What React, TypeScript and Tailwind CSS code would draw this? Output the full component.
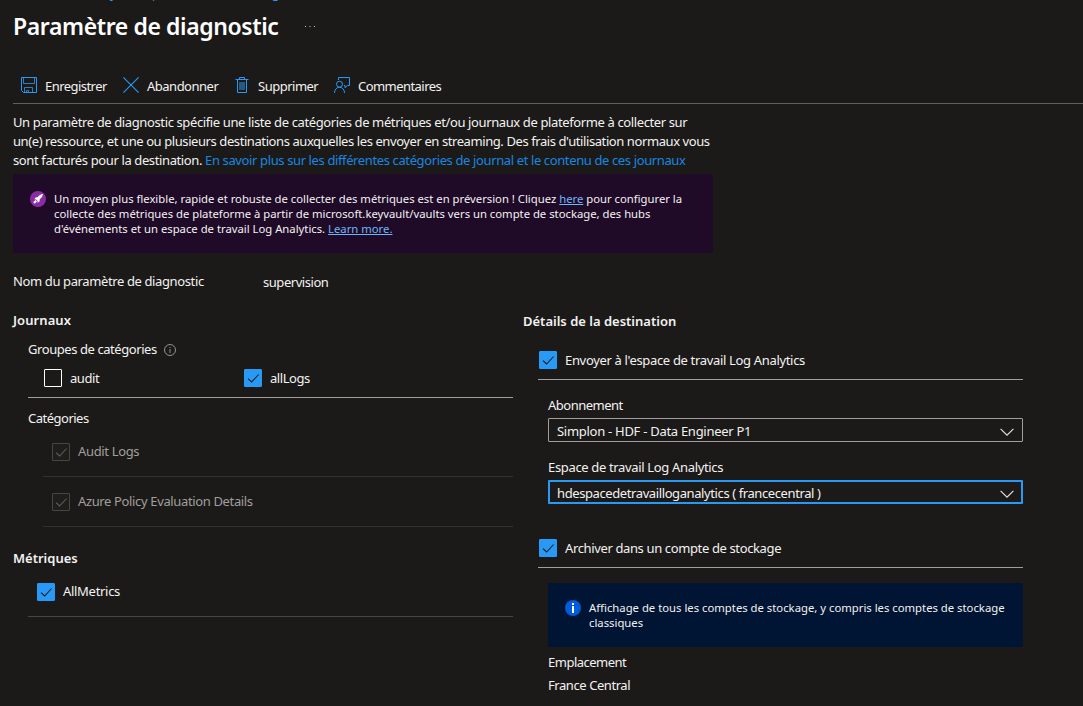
import React from "react";

function Check({ state = "on" }: { state?: "on" | "off" | "disabled" }) {
  const box =
    state === "on"
      ? "bg-[#2899f5] border-[#2899f5]"
      : state === "off"
        ? "border-white"
        : "border-[#484644] bg-[#1f1e1d]";
  return (
    <span className={`block size-[18px] shrink-0 rounded-[1px] border ${box}`}>
      {state !== "off" && (
        <svg viewBox="0 0 16 16" className="block size-4" fill="none" stroke={state === "on" ? "#1b1a19" : "#605e5c"} strokeWidth="1.05">
          <path d="M3 8.6 6.6 12 13.6 4.500" />
        </svg>
      )}
    </span>
  );
}

function SaveIcon() {
  return (
    <svg viewBox="0 0 16 16" className="block size-4" fill="none" stroke="#2899f5">
      <path d="M.5.5h15v15H2.500l-2-2z" />
      <path d="M2.500.5v6h11v-6M3.500 15.500v-5h8v5M5.500 15.500v-2h2v2" strokeOpacity=".8" />
    </svg>
  );
}

function CloseIcon() {
  return (
    <svg viewBox="0 0 16 16" className="block size-4" fill="none" stroke="#2899f5" strokeWidth="1.1">
      <path d="M.4.4l15.200 15.200M15.600.4.4 15.600" />
    </svg>
  );
}

function TrashIcon() {
  return (
    <svg viewBox="0 0 14 16" className="block h-4 w-3.5" fill="none" stroke="#2899f5">
      <path d="M4.500 2V.5h5V2M.5 2.500h13M2.500 2.500v13h9v-13" />
      <path d="M4 5h6v8H4z" fill="#2899f5" fillOpacity=".5" stroke="none" />
    </svg>
  );
}

function FeedbackIcon() {
  return (
    <svg viewBox="0 0 16 16" className="block size-4" fill="none" stroke="#2899f5">
      <path d="M4.500 3V.5h11v8h-2l-2.500 2.300V8.500h-1" />
      <circle cx="5.500" cy="7.200" r="3" />
      <path d="M.5 16c0-3.400 2-5.700 5-5.700s5 2.300 5 5.700" />
    </svg>
  );
}

function Chevron() {
  return (
    <svg viewBox="0 0 14 8" className="mt-0.5 block h-2 w-3.5" fill="none" stroke="#e6e4e2" strokeWidth="1.1">
      <path d="M.6.8 7 7.200 13.400.8" />
    </svg>
  );
}

function Tool({ icon, label, className = "" }: { icon: React.ReactNode; label: string; className?: string }) {
  return (
    <button className={`flex items-start ${className}`}>
      {icon}
      <span className="leading-[19px]">{label}</span>
    </button>
  );
}

export default function App() {
  return (
    <div className="h-[706px] w-[1083px] overflow-hidden bg-[#1b1a19] font-['Noto_Sans',sans-serif] text-[13px] leading-[19px] whitespace-nowrap text-[#f3f2f1]">
      <div className="flex h-[3px] flex-col justify-end overflow-hidden pl-[96px] text-[#2899f5]">
        <span className="leading-[19px]">keyvault | Paramètres de diagnostic</span>
      </div>

      <header className="flex h-12 items-center pl-[13px]">
        <h1 className="-mt-0.5 w-[291px] text-[23px] leading-8 font-semibold tracking-[-0.4px] text-white">Paramètre de diagnostic</h1>
        <svg viewBox="0 0 12 2" className="h-0.5 w-3" fill="#c8c6c4">
          <path d="M1 0h1v1H1zM5.500 0h1v1h-1zM10 0h1v1h-1z" />
        </svg>
      </header>

      <div className="ml-[13px] flex h-[53px] border-b border-[#605e5c] pt-[26px]">
        <Tool icon={<SaveIcon />} label="Enregistrer" className="ml-2 w-[102px] gap-2 tracking-[-0.55px]" />
        <Tool icon={<CloseIcon />} label="Abandonner" className="w-[112px] gap-2 tracking-[-0.5px]" />
        <Tool icon={<TrashIcon />} label="Supprimer" className="w-[99px] gap-[9px] tracking-[-0.5px]" />
        <Tool icon={<FeedbackIcon />} label="Commentaires" className="gap-2 tracking-[-0.55px]" />
      </div>

      <main className="pl-[13px]">
        <p className="h-[70px] pt-[9px] tracking-[-0.38px]">
          Un paramètre de diagnostic spécifie une liste de catégories de métriques et/ou journaux de plateforme à collecter sur
          <br />
          <span className="tracking-[-0.415px]">
            un(e) ressource, et une ou plusieurs destinations auxquelles les envoyer en streaming. Des frais d'utilisation normaux vous
          </span>
          <br />
          sont facturés pour la destination.{" "}
          <a className="text-[#1a86e0]">En savoir plus sur les différentes catégories de journal et le contenu de ces journaux</a>
        </p>

        <section className="flex h-[79px] w-[700px] gap-2 rounded-[2px] bg-[#1f0a28] pt-[17px] pl-[17px]">
          <svg viewBox="0 0 16 16" className="size-4 shrink-0">
            <circle cx="8" cy="8" r="8" fill="#8a2da5" />
            <path
              d="M12.900 3.100c-2.200.2-3.800 1.300-5 3L5.600 6.500 4.300 8.300l1.800.2 1.400 1.400.2 1.800 1.800-1.300.4-2.300c1.700-1.200 2.800-2.800 3-5zM5.400 9.100 3.200 11.300l1.500 1.500 2.200-2.200z"
              fill="#fff"
            />
          </svg>
          <p className="text-[11.29px] leading-[15px]">
            Un moyen plus flexible, rapide et robuste de collecter des métriques est en préversion ! Cliquez{" "}
            <a className="text-[#6cb8f6] underline">here</a> pour configurer la
            <br />
            collecte des métriques de plateforme à partir de microsoft.keyvault/vaults vers un compte de stockage, des hubs
            <br />
            d'événements et un espace de travail Log Analytics. <a className="text-[#6cb8f6] underline">Learn more.</a>
          </p>
        </section>

        <div className="flex h-[58px] pt-[19px]">
          <span className="w-[250px] tracking-[-0.38px]">Nom du paramètre de diagnostic</span>
          <span className="pt-px tracking-[-0.45px]">supervision</span>
        </div>

        <div className="flex gap-[10px]">
          <section className="w-[500px]">
            <h2 className="font-semibold tracking-[0.08px]">Journaux</h2>
            <div className="ml-[15px] h-[68px] border-b border-[#a19f9d] pt-2.5">
              <div className="flex items-center gap-[7px]">
                <span className="tracking-[-0.43px]">Groupes de catégories</span>
                <svg viewBox="0 0 12 12" className="mt-px size-3" fill="none" stroke="#a19f9d" strokeWidth=".9">
                  <circle cx="6" cy="6" r="5.500" />
                  <path d="M6 5v4M6 3v1" />
                </svg>
              </div>
              <div className="flex pt-2.5 pl-4 tracking-[-0.43px]">
                <label className="flex w-[200px] items-start gap-2">
                  <Check state="off" />
                  audit
                </label>
                <label className="flex items-start gap-2">
                  <Check />
                  allLogs
                </label>
              </div>
            </div>
            <h3 className="ml-[15px] h-8 pt-[11px] tracking-[-0.5px]">Catégories</h3>
            <div className="ml-[30px] flex h-[47px] items-start gap-2 border-b border-[#323130] pt-[13px] pl-[9px] text-[#a19f9d]">
              <Check state="disabled" />
              <span className="-mt-px tracking-[-0.35px]">Audit Logs</span>
            </div>
            <div className="ml-[30px] flex h-[50px] items-start gap-2 border-b border-[#323130] pt-4 pl-[9px] text-[#a19f9d]">
              <Check state="disabled" />
              <span className="-mt-px tracking-[-0.36px]">Azure Policy Evaluation Details</span>
            </div>
            <h2 className="pt-[22px] font-semibold">Métriques</h2>
            <label className="ml-[15px] flex h-[49px] items-start gap-2 border-b border-[#484644] pt-[15px] pl-[9px]">
              <Check />
              <span className="-mt-px tracking-[-0.3px]">AllMetrics</span>
            </label>
          </section>

          <section className="w-[500px]">
            <h2 className="pt-px font-semibold">Détails de la destination</h2>
            <label className="ml-[15px] flex h-[49px] items-start gap-2 border-b border-[#a19f9d] pt-5 pl-px tracking-[-0.33px]">
              <Check />
              Envoyer à l'espace de travail Log Analytics
            </label>
            <div className="pt-4 pl-[25px]">
              <div className="tracking-[-0.5px]">Abonnement</div>
              <button className="mt-[3px] flex h-6 w-full items-center justify-between rounded-[1px] border border-[#a19f9d] px-2 pt-px">
                <span className="pt-px tracking-[-0.28px]">Simplon - HDF - Data Engineer P1</span>
                <Chevron />
              </button>
              <div className="mt-4 tracking-[-0.34px]">Espace de travail Log Analytics</div>
              <button className="mt-[3px] flex h-6 w-full items-center justify-between rounded-[1px] border-2 border-[#2899f5] px-[7px] pt-px">
                <span className="pt-px tracking-[-0.4px]">hdespacedetravailloganalytics ( francecentral )</span>
                <Chevron />
              </button>
            </div>
            <label className="ml-[15px] flex h-[64px] items-start gap-2 border-b border-[#a19f9d] pt-[35px] pl-px tracking-[-0.37px]">
              <Check />
              Archiver dans un compte de stockage
            </label>
            <div className="pt-[15px] pl-[25px]">
              <div className="flex h-16 gap-2 rounded-[2px] bg-[#001433] pt-[17px] pl-[17px]">
                <svg viewBox="0 0 16 16" className="size-4 shrink-0">
                  <circle cx="8" cy="8" r="8" fill="#015cda" />
                  <path d="M7 3h2v2H7zM7 6h2v7H7z" fill="#fff" />
                </svg>
                <p className="text-[11.3px] leading-[15px]">
                  Affichage de tous les comptes de stockage, y compris les comptes de stockage
                  <br />
                  classiques
                </p>
              </div>
              <div className="pt-1.5 tracking-[-0.5px]">Emplacement</div>
              <div className="pt-1 tracking-[-0.43px]">France Central</div>
            </div>
          </section>
        </div>
      </main>
    </div>
  );
}
